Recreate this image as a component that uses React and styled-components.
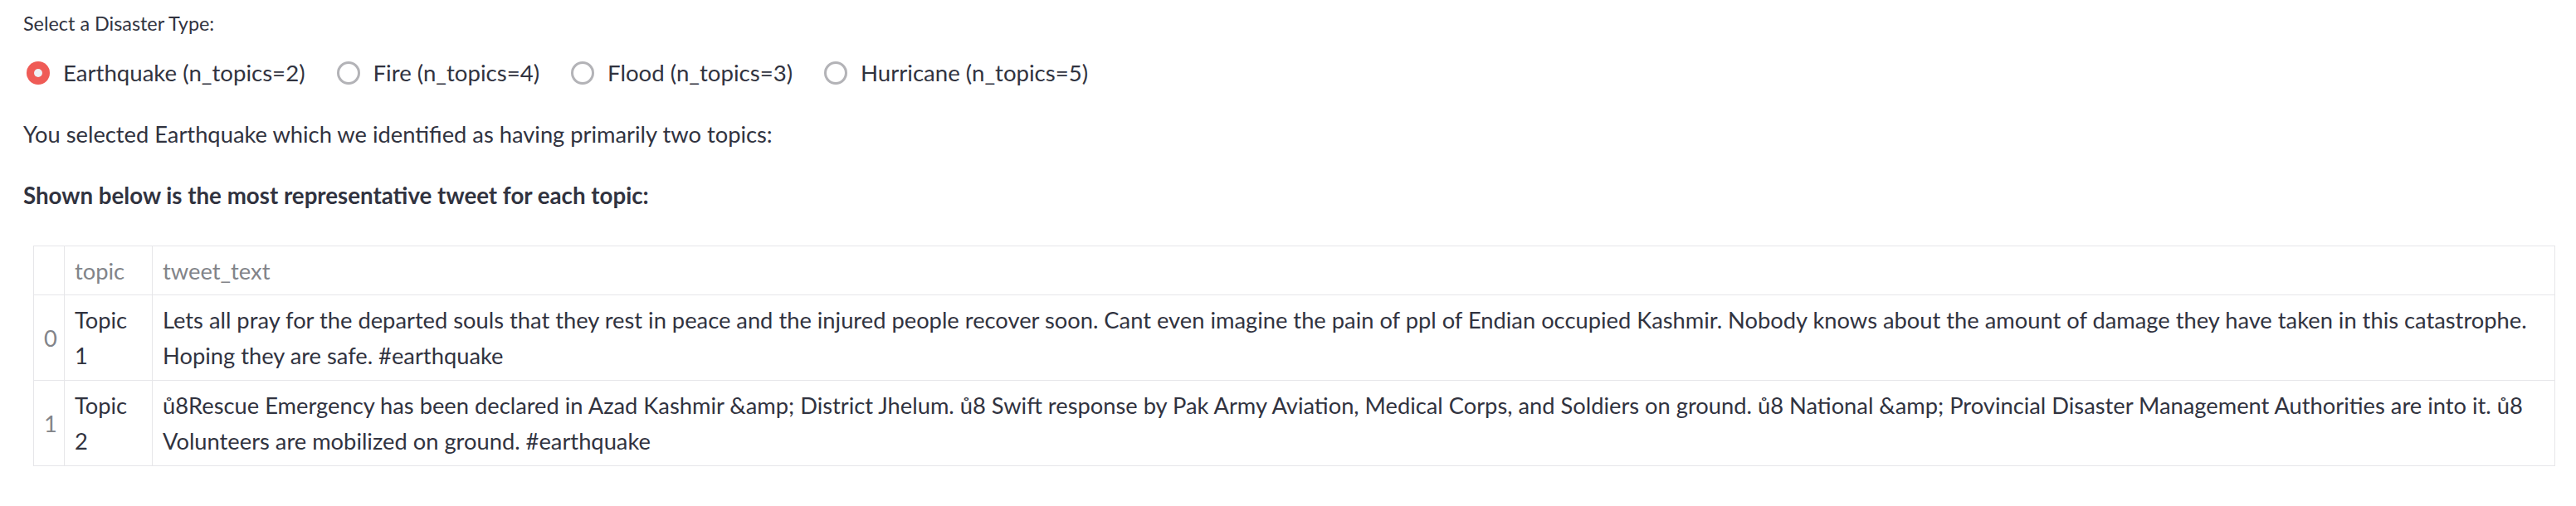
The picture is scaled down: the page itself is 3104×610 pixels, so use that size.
import React, { useState } from "react";
import styled, { createGlobalStyle } from "styled-components";

const GlobalStyle = createGlobalStyle`
  html, body { margin: 0; padding: 0; background: #ffffff; }
  body { font-family: Lato, "Liberation Sans", sans-serif; color: #31333f; }
`;

const Page = styled.main`
  display: flex;
  flex-direction: column;
  padding: 12px 25px 0 28px;
`;

const FieldLabel = styled.div`
  font-size: 23.4px;
  line-height: 32px;
`;

const RadioGroup = styled.div`
  display: flex;
  align-items: center;
  gap: 38px;
  margin-top: 22px;
  padding-left: 4px;
  height: 44px;
`;

const RadioOption = styled.label`
  display: flex;
  align-items: center;
  gap: 16px;
  font-size: 27.6px;
  line-height: 44px;
  cursor: pointer;
`;

const HiddenInput = styled.input`
  position: absolute;
  opacity: 0;
  width: 0;
  height: 0;
`;

const RadioDot = styled.span`
  position: relative;
  box-sizing: border-box;
  width: 28px;
  height: 28px;
  border-radius: 50%;
  flex: none;
  background: ${(p) => (p.$checked ? "#ef5b56" : "#ffffff")};
  border: ${(p) => (p.$checked ? "none" : "3px solid #b3b3b7")};
  &::after {
    content: "";
    display: ${(p) => (p.$checked ? "block" : "none")};
    position: absolute;
    left: 50%;
    top: 50%;
    width: 10px;
    height: 10px;
    margin: -5px 0 0 -5px;
    border-radius: 50%;
    background: #eef0f4;
  }
`;

const Paragraph = styled.p`
  margin: ${(p) => p.$top}px 0 0;
  font-size: ${(p) => (p.$bold ? 27.7 : 27.3)}px;
  font-weight: ${(p) => (p.$bold ? 700 : 400)};
  line-height: 44px;
`;

const Table = styled.table`
  margin: 38px 0 0 12px;
  width: calc(100% - 12px);
  border-collapse: collapse;
  table-layout: fixed;
  font-size: 27.3px;
  line-height: 43px;
  border: 1px solid #e6e6e9;
`;

const Col = styled.col`
  width: ${(p) => (p.$w ? `${p.$w}px` : "auto")};
`;

const HeadCell = styled.th`
  padding: 7.5px 12px;
  border: 1px solid #e6e6e9;
  text-align: left;
  font-weight: 400;
  color: #828489;
  vertical-align: middle;
`;

const Cell = styled.td`
  padding: 8px 12px;
  border: 1px solid #e6e6e9;
  vertical-align: middle;
  color: ${(p) => (p.$index ? "#828489" : "#31333f")};
  overflow-wrap: normal;
`;

const OPTIONS = [
  "Earthquake (n_topics=2)",
  "Fire (n_topics=4)",
  "Flood (n_topics=3)",
  "Hurricane (n_topics=5)",
];

const ROWS = [
  {
    topic: "Topic 1",
    text: "Lets all pray for the departed souls that they rest in peace and the injured people recover soon. Cant even imagine the pain of ppl of Endian occupied Kashmir. Nobody knows about the amount of damage they have taken in this catastrophe. Hoping they are safe. #earthquake",
  },
  {
    topic: "Topic 2",
    text: "ů8Rescue Emergency has been declared in Azad Kashmir &amp; District Jhelum. ů8 Swift response by Pak Army Aviation, Medical Corps, and Soldiers on ground. ů8 National &amp; Provincial Disaster Management Authorities are into it. ů8 Volunteers are mobilized on ground. #earthquake",
  },
];

export default function App() {
  const [selected, setSelected] = useState(0);
  return (
    <Page>
      <GlobalStyle />
      <FieldLabel>Select a Disaster Type:</FieldLabel>
      <RadioGroup role="radiogroup">
        {OPTIONS.map((opt, i) => (
          <RadioOption key={opt}>
            <HiddenInput
              type="radio"
              name="disaster"
              checked={selected === i}
              onChange={() => setSelected(i)}
            />
            <RadioDot $checked={selected === i} />
            {opt}
          </RadioOption>
        ))}
      </RadioGroup>
      <Paragraph $top={29.5}>
        You selected Earthquake which we identified as having primarily two topics:
      </Paragraph>
      <Paragraph $top={30.5} $bold>
        Shown below is the most representative tweet for each topic:
      </Paragraph>
      <Table>
        <colgroup>
          <Col $w={37} />
          <Col $w={106} />
          <Col />
        </colgroup>
        <thead>
          <tr>
            <HeadCell />
            <HeadCell>topic</HeadCell>
            <HeadCell>tweet_text</HeadCell>
          </tr>
        </thead>
        <tbody>
          {ROWS.map((row, i) => (
            <tr key={i}>
              <Cell $index>{i}</Cell>
              <Cell>{row.topic}</Cell>
              <Cell>{row.text}</Cell>
            </tr>
          ))}
        </tbody>
      </Table>
    </Page>
  );
}
